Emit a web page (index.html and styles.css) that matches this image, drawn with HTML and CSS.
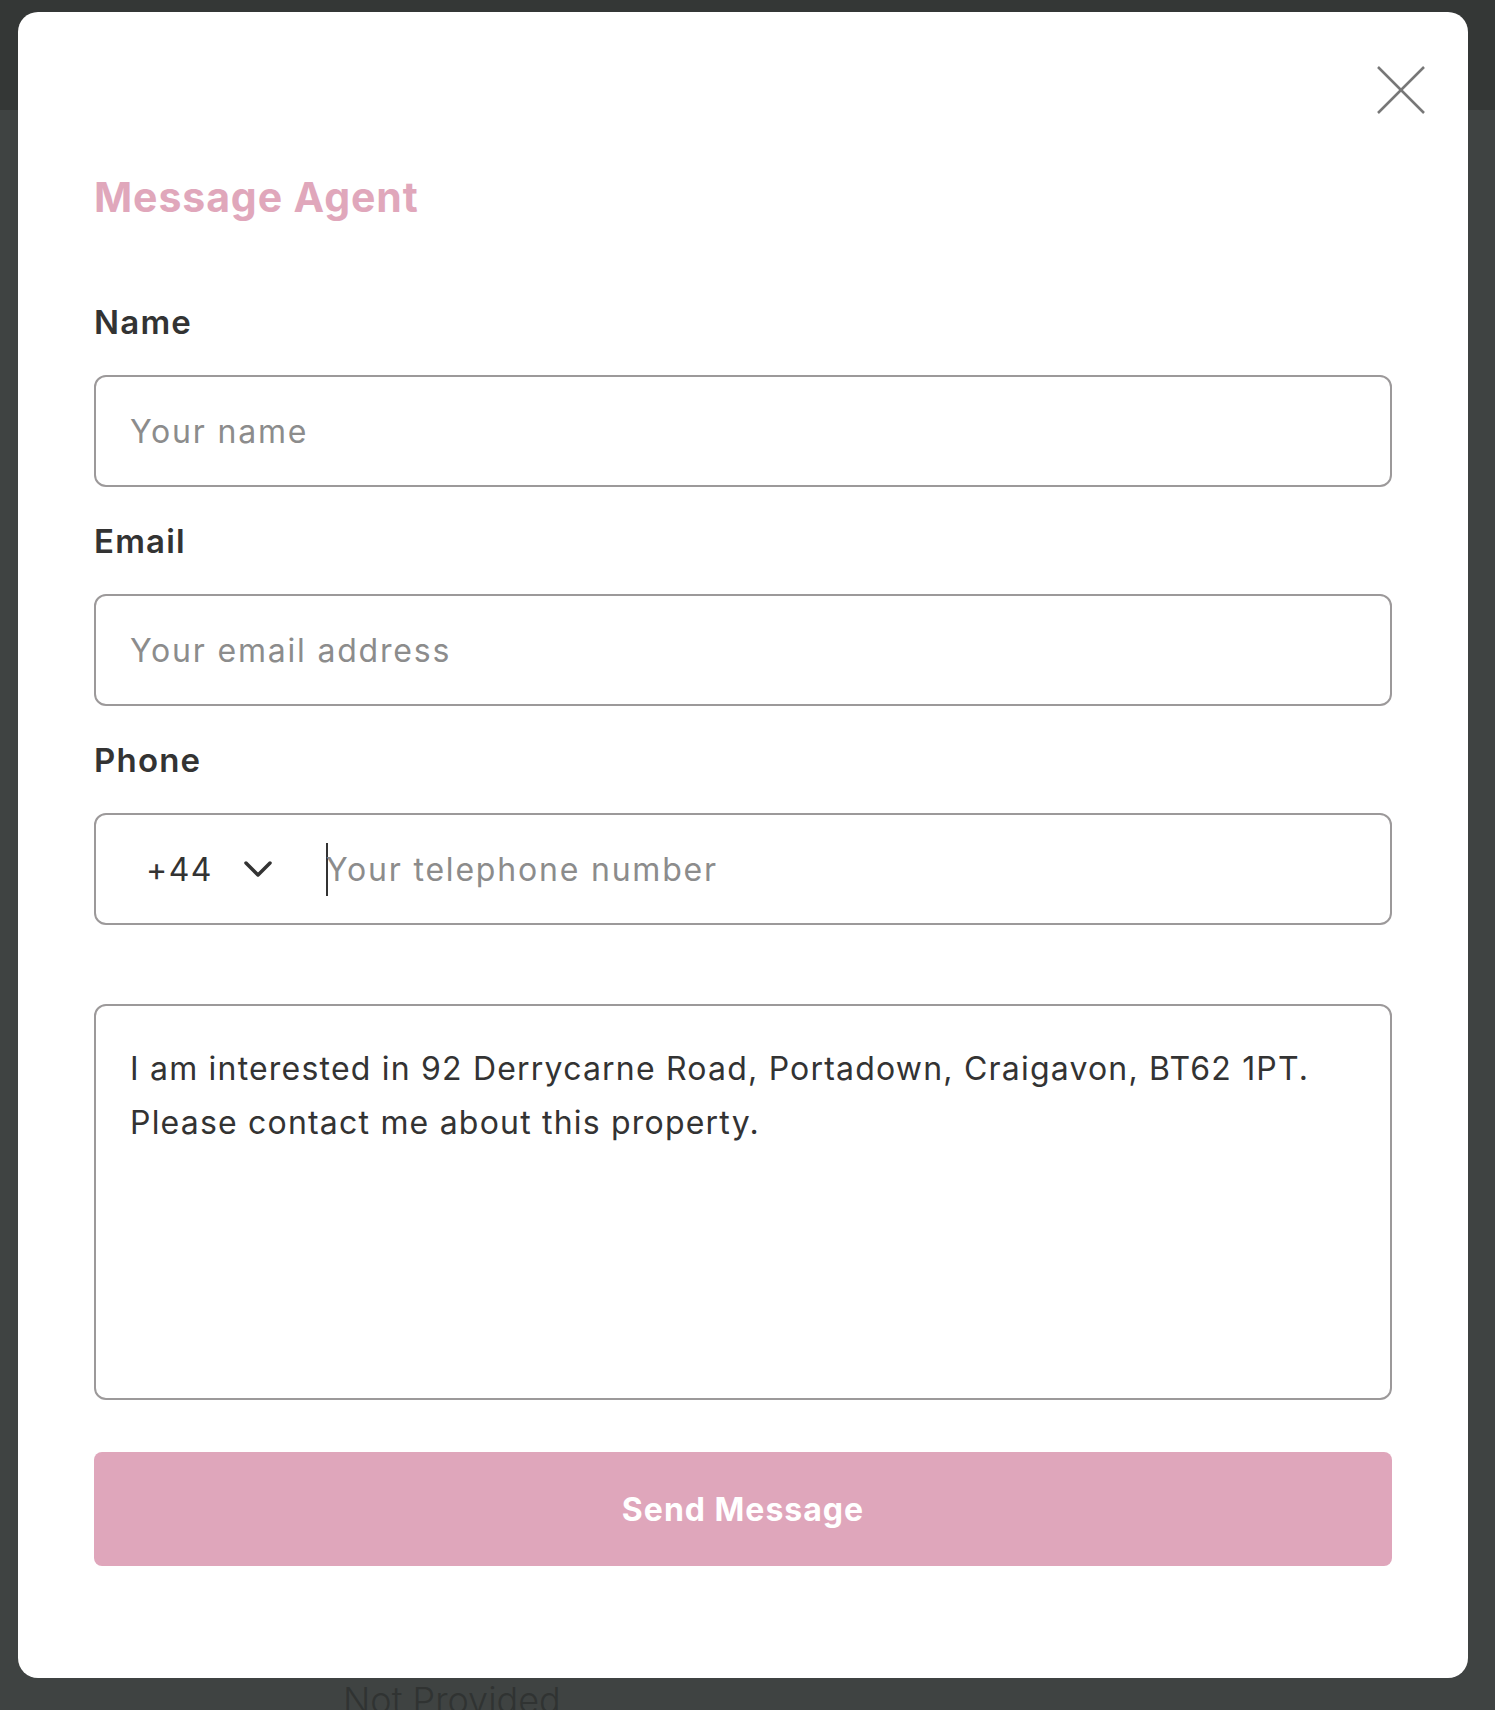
FILE: index.html
```html
<!DOCTYPE html>
<html lang="en">
<head>
    <meta charset="UTF-8">
    <meta name="viewport" content="width=device-width, initial-scale=1.0">
    <title>Message Agent</title>
    <link rel="stylesheet" href="styles.css">
</head>
<body>
    <div class="page">
        <div class="page-header"></div>
        <div class="page-body">
            <div class="page-value">Not Provided</div>
        </div>
    </div>

    <div class="overlay">
        <div class="modal">
            <div class="modal-top">
                <button class="close-btn" aria-label="Close">
                    <svg width="48" height="48" viewBox="0 0 48 48">
                        <line x1="1" y1="1" x2="47" y2="47" stroke="#777" stroke-width="2.5"/>
                        <line x1="47" y1="1" x2="1" y2="47" stroke="#777" stroke-width="2.5"/>
                    </svg>
                </button>
            </div>
            <h2 class="modal-title">Message Agent</h2>
            <form class="form">
                <label class="field-label" for="name">Name</label>
                <input class="field-input" id="name" type="text" placeholder="Your name">

                <label class="field-label" for="email">Email</label>
                <input class="field-input" id="email" type="email" placeholder="Your email address">

                <label class="field-label" for="phone">Phone</label>
                <div class="phone-field">
                    <div class="country">
                        <span>+44</span>
                        <svg width="30" height="18" viewBox="0 0 30 18">
                            <polyline points="3,3 15,15 27,3" fill="none" stroke="#333" stroke-width="3.5" stroke-linecap="round" stroke-linejoin="round"/>
                        </svg>
                    </div>
                    <span class="caret"></span>
                    <input class="phone-number" id="phone" type="tel" placeholder="Your telephone number">
                </div>

                <textarea class="message">I am interested in 92 Derrycarne Road, Portadown, Craigavon, BT62 1PT.
Please contact me about this property.</textarea>

                <button class="send-btn" type="button">Send Message</button>
            </form>
        </div>
    </div>
</body>
</html>
```

FILE: styles.css
```css
body {
    margin: 0;
    font-family: Inter, "Noto Sans", sans-serif;
    background-color: #3f4342;
    height: 1710px;
    overflow: hidden;
}
.page {
    height: 1710px;
    display: flex;
    flex-direction: column;
}
.page-header {
    height: 110px;
    background-color: #343736;
}
.page-body {
    flex: 1;
    display: flex;
    flex-direction: column;
    justify-content: flex-end;
    padding-left: 343px;
}
.page-value {
    font-size: 36px;
    font-weight: 300;
    line-height: 1;
    color: #303332;
    margin-bottom: -8px;
}
.overlay {
    position: fixed;
    top: 0;
    left: 0;
    right: 0;
    bottom: 0;
    display: flex;
    align-items: flex-start;
    padding: 12px 27px 0 18px;
}
.modal {
    width: 1450px;
    box-sizing: border-box;
    background-color: #ffffff;
    border-radius: 20px;
    padding: 54px 76px 112px;
}
.modal-top {
    display: flex;
    justify-content: flex-end;
    margin-right: -33px;
}
.close-btn {
    border: 0;
    background: none;
    padding: 0;
    width: 48px;
    height: 48px;
    cursor: pointer;
}
.close-btn svg {
    display: block;
}
.modal-title {
    margin: 59px 0 0;
    font-size: 41px;
    line-height: 48px;
    font-weight: 700;
    letter-spacing: 0.9px;
    color: #e0a7bb;
}
.form {
    margin-top: 81px;
    display: flex;
    flex-direction: column;
}
.field-label {
    display: block;
    font-size: 33px;
    line-height: 40px;
    font-weight: 600;
    letter-spacing: 1.2px;
    color: #333333;
    margin-bottom: 33px;
}
.field-input {
    height: 112px;
    box-sizing: border-box;
    width: 100%;
    border: 2px solid #9c999a;
    border-radius: 12px;
    padding: 0 34px;
    margin: 0 0 34px;
    font-family: inherit;
    font-size: 32px;
    letter-spacing: 1.8px;
    color: #333333;
    outline: none;
}
::placeholder {
    color: #8c8c8c;
    opacity: 1;
}
.phone-field {
    display: flex;
    align-items: center;
    height: 112px;
    box-sizing: border-box;
    border: 2px solid #9c999a;
    border-radius: 12px;
    padding-left: 50px;
    margin-bottom: 79px;
}
.country {
    display: flex;
    align-items: center;
    gap: 30px;
    font-size: 32px;
    letter-spacing: 1.5px;
    color: #333333;
    margin-right: 53px;
}
.country svg {
    display: block;
}
.caret {
    width: 2px;
    height: 53px;
    background-color: #333333;
}
.phone-number {
    flex: 1;
    border: 0;
    outline: none;
    padding: 0;
    margin-left: -2px;
    font-family: inherit;
    font-size: 32px;
    letter-spacing: 1.8px;
    color: #333333;
    background: transparent;
}
.message {
    height: 396px;
    box-sizing: border-box;
    width: 100%;
    border: 2px solid #9c999a;
    border-radius: 12px;
    padding: 36px 34px;
    margin: 0 0 52px;
    font-family: inherit;
    font-size: 32px;
    line-height: 54px;
    letter-spacing: 1.2px;
    color: #333333;
    resize: none;
    outline: none;
}
.send-btn {
    height: 114px;
    border: 0;
    border-radius: 8px;
    background-color: #dfa6bb;
    color: #ffffff;
    font-family: inherit;
    font-size: 32px;
    font-weight: 700;
    letter-spacing: 1px;
    cursor: pointer;
}
```
